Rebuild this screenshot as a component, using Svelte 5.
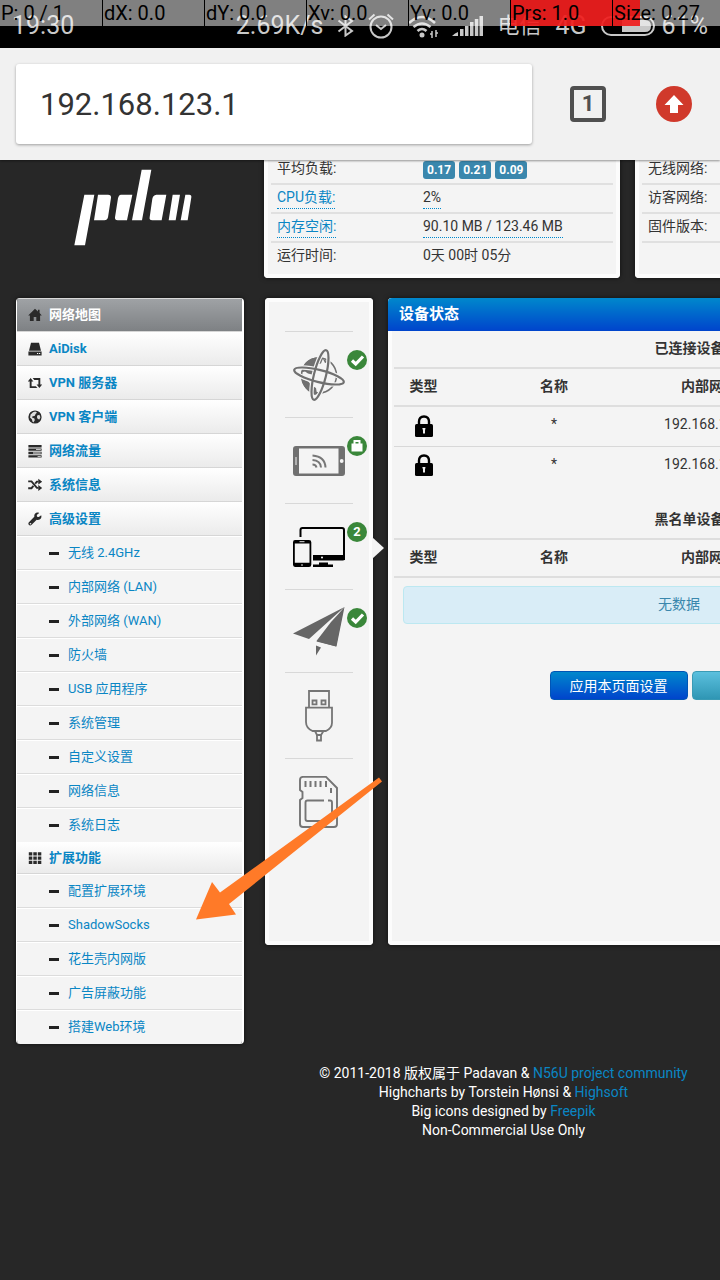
<script>
  const touch = ['P: 0 / 1', 'dX: 0.0', 'dY: 0.0', 'Xv: 0.0', 'Yv: 0.0', 'Prs: 1.0', 'Size: 0.27'];

  const menu = [
    { icon: 'home', label: '网络地图', active: true },
    { icon: 'disk', label: 'AiDisk' },
    { icon: 'retweet', label: 'VPN 服务器' },
    { icon: 'globe', label: 'VPN 客户端' },
    { icon: 'tasks', label: '网络流量' },
    { icon: 'random', label: '系统信息' },
    {
      icon: 'wrench',
      label: '高级设置',
      children: ['无线 2.4GHz', '内部网络 (LAN)', '外部网络 (WAN)', '防火墙', 'USB 应用程序', '系统管理', '自定义设置', '网络信息', '系统日志']
    },
    {
      icon: 'grid',
      label: '扩展功能',
      compact: true,
      children: ['配置扩展环境', 'ShadowSocks', '花生壳内网版', '广告屏蔽功能', '搭建Web环境']
    }
  ];

  const strip = [
    { icon: 'internet', badge: 'check', label: '互联网' },
    { icon: 'wireless', badge: 'lock', label: '无线' },
    { icon: 'clients', badge: '2', label: '设备', active: true },
    { icon: 'plane', badge: 'check', label: '扩展', short: true },
    { icon: 'usb', label: 'USB' },
    { icon: 'card', label: 'SD' }
  ];

  const clients = ['192.168.123.5', '192.168.123.8'];
  let address = $state('192.168.123.1');
</script>

{#snippet menuIcon(name)}
  <svg class="glyph" viewBox="0 0 14 14" aria-hidden="true">
    {#if name === 'home'}
      <path d="M7 .8 .2 7.4h1.7V13h3.8V9h2.6v4h3.8V7.4h1.7L11.6 5V1.8H9.9v1.6z" />
    {:else if name === 'disk'}
      <path d="M3 .8h8l2 8H1zM.4 9.6h13.2v3.8H.4z" />
      <path d="M9 11h1.2v1H9zM11 11h1.2v1H11z" fill="#fff" />
    {:else if name === 'retweet'}
      <path d="M2.6 2 5.4 5.4H3.6v4.8h4.2l1.6 1.9H1.7V5.4H-.2zM4.7 2h7.6v6.6h1.9L11.4 12 8.6 8.6h1.8V3.9H6.3z" />
    {:else if name === 'globe'}
      <circle cx="7" cy="7" r="6.6" />
      <path d="M7.2 1.6 9 2.4 7.6 4l-1 2-2 .2L4 7.6l2.4 1 .4 1.6-1.4 2.2-1-.8-.4-2.2L2 7.4l.6-3L5 2.2zM9.2 5.4l2.2-.6 1 2.4-1 2.4-1.6-.6-.9-1.8z" fill="#ddd" />
    {:else if name === 'tasks'}
      <path fill-rule="evenodd" d="M.4 1h13.2v2.4H.4zM.4 4.4h13.2v2.4H.4zM.4 7.8h13.2v2.4H.4zM.4 11.2h13.2v2.4H.4zM8 5.2v.8h4.8v-.8zM5 8.6v.8h7.8v-.8zM9.6 12v.8h3.2V12z" />
    {:else if name === 'random'}
      <path d="M.2 3.4h3.3l5.4 6.5h1.6M.2 10.2h3.3l1.9-2.3M7.2 5.6l1.7-2h1.6" fill="none" stroke="currentColor" stroke-width="1.9" />
      <path d="M10.3.8 14.2 3.7l-3.9 2.9zM10.3 7.1l3.9 2.9-3.9 2.9z" />
    {:else if name === 'wrench'}
      <path d="M13.2 3.2 10.8 5 9 4.7 8.8 3 11.2 1C8.6-.3 5.7 1.7 6.3 4.8L.7 10.4c-1.2 1.4.8 4 2.7 2.7L8.7 7.7c3.2.9 5.5-1.7 4.5-4.5z" />
      <circle cx="2.5" cy="11.7" r=".8" fill="#eee" />
    {:else}
      <path d="M.8 1.2h3.5v3.3H.8zM5.3 1.2h3.5v3.3H5.3zM9.8 1.2h3.5v3.3H9.8zM.8 5.5h3.5v3.3H.8zM5.3 5.5h3.5v3.3H5.3zM9.8 5.5h3.5v3.3H9.8zM.8 9.8h3.5v3.3H.8zM5.3 9.8h3.5v3.3H5.3zM9.8 9.8h3.5v3.3H9.8z" />
    {/if}
  </svg>
{/snippet}

{#snippet stripIcon(name)}
  {#if name === 'internet'}
    <svg viewBox="0 0 52 52" aria-hidden="true">
      <circle cx="26" cy="26.5" r="17.5" fill="none" stroke="#707070" stroke-width="1.5" />
      <path fill="#707070" d="M9 22C10 14 16 9 23 8.500l7 1-2 5-4 1 1 4-4 3-2 3-4-1-3-2-4 1zM9 30l6 2 3 4 5 3 1 6-2 1C14 43 9 36 9 30zM30 10l6 3-4 1z" />
      <g fill="none" stroke="#f4f4f4" stroke-width="4.5">
        <ellipse cx="26" cy="27" rx="26" ry="6" transform="rotate(14 26 27)" />
        <ellipse cx="27" cy="26" rx="26" ry="6" transform="rotate(-76 27 26)" />
      </g>
      <g fill="none" stroke="#707070" stroke-width="2.2">
        <ellipse cx="26" cy="27" rx="25.500" ry="6" transform="rotate(14 26 27)" />
        <ellipse cx="27" cy="26" rx="25.500" ry="6" transform="rotate(-76 27 26)" />
      </g>
    </svg>
  {:else if name === 'wireless'}
    <svg viewBox="0 0 52 52" aria-hidden="true">
      <path fill="#707070" fill-rule="evenodd" d="M3 11h46q3 0 3 3v24q0 3-3 3H3q-3 0-3-3V14q0-3 3-3zM6 13.500v25h39.500v-25z" />
      <path d="M3 22v8" stroke="#ddd" stroke-width="1.2" />
      <circle cx="48.700" cy="26" r="1.9" fill="#f4f4f4" />
      <path d="M19.500 29.500q3.500 0 4 3M19.500 25q8 .5 8.500 7.500M19.500 20.500q12.500 1 13 12" fill="none" stroke="#777" stroke-width="2" />
    </svg>
  {:else if name === 'clients'}
    <svg viewBox="0 0 52 52" aria-hidden="true">
      <path d="M7.500 16V9q0-2 2-2H49q2 0 2 2v30" fill="none" stroke="#000" stroke-width="2" />
      <path d="M20 34h32v3.500q0 2-2 2H20zM26 41.500h9v2h5V46H20v-2.500h6z" />
      <path fill-rule="evenodd" d="M2 19h14q2.300 0 2.300 2.300v22.400Q18.300 46 16 46H2q-2-.2-2-2.300V21.300Q0 19 2 19zM1.800 22.500v19.300h14.700V22.500z" />
      <circle cx="29" cy="36.500" r="1" fill="#fff" />
      <path d="M6.500 20.700h5M9 43v2" stroke="#ddd" />
    </svg>
  {:else if name === 'plane'}
    <svg viewBox="0 0 52 49" aria-hidden="true">
      <path fill="#666" d="M51.500 0 0 26.500l16 5.500zM51.500 0 23.500 34.500 43.500 39.500zM23 38.500v10l5-8z" />
      <path d="M47 6 17.500 32.500l5 2z" fill="#f4f4f4" />
      <path fill="#666" d="M50.500 1.500 38 15 23.500 34l19.500 5.500z" />
    </svg>
  {:else if name === 'usb'}
    <svg viewBox="0 0 52 52" fill="none" stroke="#757575" stroke-width="1.800" aria-hidden="true">
      <path d="M16 17V1h20v16M13 17.700h26v15Q39 38 33 41H19.500Q13 38 13 32zM22 41l2 4v5.500h4V45l2.500-4M23 45h6" />
      <path d="M19.500 10.500h4v3.800h-4zM28.500 10.500h4v3.800h-4z" />
    </svg>
  {:else}
    <svg viewBox="0 0 52 52" fill="none" stroke="#757575" stroke-width="1.900" aria-hidden="true">
      <path d="M10 .9h23L44 12v36q0 3-3 3H10q-3 0-3-3V24l2.500-2v-6L7 14V4Q7 .9 10 .9z" />
      <path d="M12.500 5v6M17.500 5v6M22.500 5v6M27.500 5v6M33 5v6M38 12v5" stroke-width="2" />
      <path d="M31 24.500H14.500q-2 0-2 2V43q0 2 2 2H37q2 0 2-2V26.500q0-2-2-2h-2" />
    </svg>
  {/if}
{/snippet}

<div class="screen">
  <header class="status">
    <span class="clock">19:30</span>
    <span>2.69K/s</span>
    <svg class="bt" viewBox="0 0 17 22" aria-hidden="true"><path d="M1.500 5.500 15 16l-6.500 4.500v-19L15 6 1.500 16.500" fill="none" stroke="currentColor" stroke-width="2" /></svg>
    <svg class="alarm" viewBox="0 0 26 26" fill="none" stroke="currentColor" stroke-width="2" aria-hidden="true"><circle cx="13" cy="14" r="10.500" /><path d="M1 6.500 6.500 1.500M25 6.500l-5.500-5M8 12l5 4 5-4" /></svg>
    <svg class="wifi" viewBox="0 0 30 24" aria-hidden="true"><g fill="none" stroke="currentColor" stroke-width="2.600"><path d="M1 9q13-12 26 0M5.500 13q8.500-7 17 0M9.500 17q4.500-4 9 0" /></g><circle cx="14" cy="21" r="2.500" fill="currentColor" /><path d="M24 17v7M28 16v7M22 20h2M28 19h2" stroke="currentColor" stroke-width="1.500" /></svg>
    <svg class="signal" viewBox="0 0 31 20" fill="currentColor" aria-hidden="true"><path d="M0 20q3-3 6-4v4zM8 13h3.500v7H8zM13 10h3.500v10H13zM18 6h3.500v14H18zM22.800 3h3.500v17h-3.500zM27.500 0H31v20h-3.500z" /></svg>
    <span class="carrier">电信</span>
    <span>4G</span>
    <svg class="battery" viewBox="0 0 54 20" aria-hidden="true"><rect x="1" y="1" width="52" height="18" rx="9" fill="none" stroke="currentColor" stroke-width="2" /><path d="M21 4h23q6 0 6 6t-6 6H21z" fill="currentColor" /></svg>
    <span class="percent">61%</span>
    <div class="touch">
      {#each touch as t, i}
        <span class:pressed={i === 5} class:sized={i === 6}>{t}</span>
      {/each}
    </div>
  </header>

  <form class="toolbar">
    <input type="text" aria-label="网址" bind:value={address} />
    <button type="button" class="tabs">1</button>
    <button type="button" class="update" aria-label="更新">
      <svg viewBox="0 0 36 36" aria-hidden="true"><circle cx="18" cy="18" r="18" fill="#d0392b" /><path d="M18 9 8.500 19H14v8h8v-8h5.500z" fill="#fff" /></svg>
    </button>
  </form>

  <div class="viewport">
    <div class="page">
      <div class="top">
        <a class="logo" href="#home" aria-label="padavan">
          <svg viewBox="215 55 366 237" fill="#fff" aria-hidden="true">
            <path d="M252 135h30l-28 152h-32zM293 135h30q10 0 9 9l-9 59q-2 9-11 9h-31zM362 135h34l-16 77h-28q-9 0-8-9l9-57q2-10 9-11zM424 60h29l-28 152h-30zM468 135h30l-14 77h-28q-10 0-8-9l8-56q2-11 12-12zM517 135h22l-13 77h-21zM555 135h12q7 0 6 8l-11 69h-21z" />
          </svg>
        </a>
        <dl class="panel info">
          <div><dt>平均负载:</dt><dd class="loads"><b>0.17</b><b>0.21</b><b>0.09</b></dd></div>
          <div><dt><a class="dotted" href="#cpu">CPU负载:</a></dt><dd><span class="dotted">2%</span></dd></div>
          <div><dt><a class="dotted" href="#mem">内存空闲:</a></dt><dd><span class="dotted">90.10 MB / 123.46 MB</span></dd></div>
          <div><dt>运行时间:</dt><dd>0天 00时 05分</dd></div>
        </dl>
        <dl class="panel info">
          <div><dt>无线网络:</dt></div>
          <div><dt>访客网络:</dt></div>
          <div><dt>固件版本:</dt></div>
          <div></div>
        </dl>
      </div>

      <div class="body">
        <nav class="menu">
          {#each menu as item}
            <a class="head" class:active={item.active} class:compact={item.compact} href="#menu">
              {@render menuIcon(item.icon)}{item.label}
            </a>
            {#if item.children}
              <ul>
                {#each item.children as child}
                  <li><a href="#menu"><i></i>{child}</a></li>
                {/each}
              </ul>
            {/if}
          {/each}
        </nav>

        <div class="content">
          <div class="panel strip">
            {#each strip as s}
              <a class="tile" href="#status" aria-label={s.label}>
                <span class="pic" class:short={s.short}>
                  {@render stripIcon(s.icon)}
                  {#if s.badge}
                    <span class="badge">
                      {#if s.badge === 'check'}
                        <svg viewBox="0 0 20 20" aria-hidden="true"><path d="m5 10.500 3.700 3.500L16 6.500" fill="none" stroke="#fff" stroke-width="3.200" /></svg>
                      {:else if s.badge === 'lock'}
                        <svg viewBox="0 0 20 20" aria-hidden="true"><path d="M4.500 7.500h11v8h-11z" fill="#fff" /><path d="M7.500 8V5h5v3" fill="none" stroke="#fff" stroke-width="2" /></svg>
                      {:else}{s.badge}{/if}
                    </span>
                  {/if}
                </span>
                {#if s.active}<span class="pointer"></span>{/if}
              </a>
            {/each}
          </div>

          <main class="panel main">
            <h1>设备状态</h1>
            <div class="inner">
              <table>
                <colgroup><col class="c1" /><col class="c2" /><col class="c3" /><col /></colgroup>
                <thead>
                  <tr><th colspan="4">已连接设备</th></tr>
                  <tr><th>类型</th><th>名称</th><th>内部网络</th><th></th></tr>
                </thead>
                <tbody>
                  {#each clients as ip}
                    <tr>
                      <td><svg class="lock" viewBox="0 0 18 22" aria-label="lock"><path d="M4 11V6.500q0-5 5-5t5 5V11" fill="none" stroke="#000" stroke-width="2.400" /><rect y="9" width="18" height="13" rx="1.500" /><path d="M7.300 13h3.200l-.5 2.500v3H8v-3z" fill="#eee" /></svg></td>
                      <td>*</td><td>{ip}</td><td></td>
                    </tr>
                  {/each}
                </tbody>
              </table>
              <table>
                <colgroup><col class="c1" /><col class="c2" /><col class="c3" /><col /></colgroup>
                <thead>
                  <tr><th colspan="4">黑名单设备</th></tr>
                  <tr><th>类型</th><th>名称</th><th>内部网络</th><th></th></tr>
                </thead>
              </table>
              <p class="alert">无数据</p>
              <div class="actions">
                <button type="button">应用本页面设置</button>
                <button type="button" class="teal" aria-label="刷新"></button>
              </div>
            </div>
          </main>
        </div>

        <svg class="arrow" viewBox="0 0 188 146" aria-hidden="true"><path d="M184 1.500 187 5.500 34 128 41 138.500 1 143.500 17 106 25 116.500z" fill="#ff7a28" /></svg>
      </div>

      <footer>
        © 2011-2018 版权属于 Padavan &amp; <a href="#n56u">N56U project community</a><br />
        Highcharts by Torstein Hønsi &amp; <a href="#highsoft">Highsoft</a><br />
        Big icons designed by <a href="#freepik">Freepik</a><br />
        Non-Commercial Use Only
      </footer>
    </div>
  </div>
</div>

<style>
  :global(body) { margin: 0; background: #272727; }
  * { box-sizing: border-box; }
  .screen {
    min-height: 100vh;
    display: flex;
    flex-direction: column;
    background: #272727;
    color: #333;
    font: 14px/20px Roboto, "Noto Sans CJK SC", sans-serif;
  }
  a { color: #0a86c4; text-decoration: none; }
  svg { display: block; }
  button, input { font: inherit; }

  .status {
    position: relative;
    height: 48px;
    padding: 4px 12px 0;
    display: flex;
    align-items: center;
    gap: 14px;
    background: #000;
    color: #c8c8c8;
    font-size: 25px;
    line-height: 44px;
    white-space: nowrap;
    overflow: hidden;
  }
  .clock { margin-right: auto; }
  .carrier { font-size: 22px; }
  .bt { width: 17px; height: 22px; }
  .alarm { width: 26px; height: 26px; }
  .wifi { width: 30px; height: 24px; }
  .signal { width: 31px; height: 20px; }
  .battery { width: 54px; height: 20px; }
  .percent { margin-left: -7px; }
  .touch {
    position: absolute;
    inset: 0 0 auto;
    display: grid;
    grid-template-columns: repeat(6, 17fr) 18fr;
    color: #000;
    font-size: 20px;
    line-height: 26px;
  }
  .touch span { padding-left: 1px; background: rgb(255 255 255 / .5); }
  .touch span + span { border-left: 1px solid #000; }
  .touch .pressed { background: rgb(240 30 30 / .93); }
  .touch .sized { background: linear-gradient(90deg, rgb(240 30 30 / .93) 25%, rgb(255 255 255 / .5) 25%); }

  .toolbar {
    position: relative;
    display: flex;
    align-items: center;
    height: 112px;
    padding: 0 28px 0 16px;
    background: #f1f1f1;
    box-shadow: 0 1px 2px rgb(0 0 0 / .4);
  }
  .toolbar input {
    flex: 1;
    min-width: 0;
    height: 80px;
    padding: 0 24px;
    border: 0;
    border-radius: 3px;
    background: #fff;
    box-shadow: 0 1px 3px rgb(0 0 0 / .35);
    color: #333;
    font-size: 31px;
    outline: 0;
  }
  .tabs {
    width: 36px;
    height: 36px;
    margin: 0 50px 0 38px;
    padding: 0;
    border: 4px solid #505050;
    border-radius: 4px;
    background: none;
    color: #505050;
    font-size: 22px;
    font-weight: 700;
    line-height: 28px;
  }
  .update { width: 36px; height: 36px; padding: 0; border: 0; background: none; }

  .viewport { flex: 1; overflow: hidden; }
  .page { min-width: 991px; margin-top: -4px; padding-left: 16px; }
  .panel {
    background: #f4f4f4;
    border-radius: 4px;
    box-shadow: inset 0 0 0 4px #fcfcfc, 0 0 5px rgb(0 0 0 / .6);
  }
  .top { display: flex; gap: 15px; }
  .logo { width: 233px; padding: 12px 0 0 56px; }
  .logo svg { width: 122px; height: 79px; }
  .info { flex: 1; margin: 0; padding: 0 7px 6px; }
  .info div { display: flex; height: 29px; padding-left: 6px; border-bottom: 2px solid #e0e0e0; line-height: 25px; }
  .info div:last-child { border-color: transparent; }
  .info dt { width: 146px; }
  .info dd { margin: 0; }
  .dotted { display: inline-block; height: 24px; border-bottom: 1px dotted #0088cc; line-height: 25px; }
  .loads { display: flex; gap: 4px; align-items: center; }
  .loads b {
    height: 18px;
    padding: 0 4px;
    border-radius: 3px;
    background: #3a87ad;
    color: #fff;
    font-size: 12px;
    line-height: 18px;
  }

  .body { position: relative; display: flex; align-items: flex-start; gap: 21px; margin-top: 20px; }
  .menu {
    flex: none;
    width: 228px;
    overflow: hidden;
    border: solid #fff;
    border-width: 0 2px 0 1px;
    border-radius: 4px;
    font-size: 13px;
    box-shadow: 0 0 5px rgb(0 0 0 / .6);
  }
  .head {
    display: flex;
    align-items: center;
    gap: 7px;
    height: 34px;
    padding-left: 11px;
    border-bottom: 1px solid #d6d6d6;
    background: linear-gradient(#fff, #ebebeb);
    font-weight: 700;
  }
  .active { background: linear-gradient(#a0a3a6, #7e8184); color: #fff; box-shadow: inset 0 1px #d8d8d8; }
  .compact { height: 32px; }
  .glyph { width: 14px; height: 14px; overflow: visible; color: #2a2a2a; fill: currentColor; }
  .menu ul { margin: 0; padding: 0; list-style: none; background: #f4f4f4; }
  .menu li a {
    display: flex;
    align-items: center;
    gap: 9px;
    height: 34px;
    padding-left: 32px;
    border-top: 1px solid #fff;
    border-bottom: 1px solid #dcdcdc;
  }
  .menu li:last-child a { border-bottom-color: transparent; }
  .menu i { width: 10px; height: 3px; background: #222; }

  .content { flex: 1; display: flex; gap: 15px; min-height: 647px; }
  .strip { width: 108px; padding: 33px 20px; }
  .tile { position: relative; display: block; padding: 17px 8px 16px; border-top: 1px solid #d8d8d8; }
  .pic { position: relative; display: block; height: 52px; }
  .short { height: 49px; }
  .badge {
    position: absolute;
    top: 1px;
    left: 54px;
    width: 20px;
    height: 20px;
    border-radius: 50%;
    background: #3a873a;
    color: #fff;
    font-size: 13px;
    font-weight: 700;
    text-align: center;
  }
  .pointer {
    position: absolute;
    top: 33px;
    right: -31px;
    border: solid transparent;
    border-width: 11px 0 11px 12px;
    border-left-color: #f4f4f4;
  }

  .main { flex: 1; }
  h1 {
    margin: 0;
    height: 33px;
    padding-left: 11px;
    border-radius: 4px 4px 0 0;
    background: linear-gradient(#0088cc, #0044cc);
    color: #fff;
    font-size: 15px;
    line-height: 32px;
  }
  .inner { padding: 0 6px; }
  table { width: 100%; margin-bottom: 17px; border-collapse: separate; border-spacing: 0; table-layout: fixed; }
  table + table { margin-bottom: 8px; }
  .c1 { width: 59px; }
  .c2 { width: 202px; }
  .c3 { width: 108px; }
  th { height: 38px; padding: 0 0 2px; border-bottom: 2px solid #dedede; }
  td { height: 39px; padding: 0 0 5px; text-align: center; white-space: nowrap; }
  tbody tr + tr td { border-top: 1px solid #d8d8d8; }
  .lock { width: 18px; height: 22px; margin: 3px auto 0; }
  .alert {
    margin: 0 9px;
    padding: 7px 35px 9px 14px;
    border: 1px solid #bce8f1;
    border-radius: 4px;
    background: #d9edf7;
    color: #3a87ad;
    text-align: center;
  }
  .actions { display: flex; justify-content: center; gap: 4px; margin-top: 47px; }
  .actions button {
    width: 138px;
    height: 29px;
    padding: 0;
    border: 1px solid #0055b5;
    border-radius: 4px;
    background: linear-gradient(#0088cc, #0044cc);
    color: #fff;
    line-height: 24px;
  }
  .actions .teal { border-color: #3a9bb5; background: linear-gradient(#5bc0de, #2f96b4); }
  .arrow { position: absolute; left: 179px; top: 478px; width: 188px; height: 146px; }

  footer { margin: 20px 0 40px; color: #fff; line-height: 19px; text-align: center; }
</style>
